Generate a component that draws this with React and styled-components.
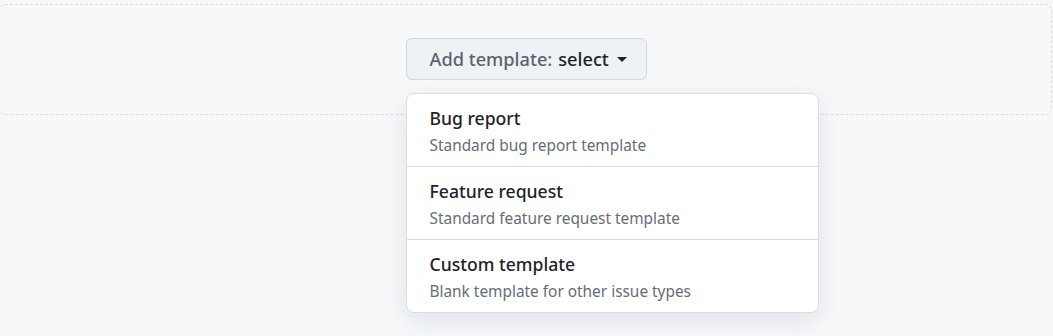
import styled, { createGlobalStyle } from "styled-components";

const GlobalStyle = createGlobalStyle`
    body {
        margin: 0;
        background: #f6f8fa;
        font-family: "Noto Sans", "Open Sans", sans-serif;
    }
`;

const templates = [
    { title: "Bug report", description: "Standard bug report template" },
    { title: "Feature request", description: "Standard feature request template" },
    { title: "Custom template", description: "Blank template for other issue types" }
];

const App = () => (
    <>
        <GlobalStyle />
        <Page>
            <DropZone>
                <Picker>
                    <SelectButton type="button">
                        <ButtonLabel>Add template:</ButtonLabel>
                        <ButtonValue>select</ButtonValue>
                        <Caret />
                    </SelectButton>
                    <Menu>
                        {templates.map(item => (
                            <MenuItem key={item.title}>
                                <ItemTitle>{item.title}</ItemTitle>
                                <ItemDescription>{item.description}</ItemDescription>
                            </MenuItem>
                        ))}
                    </Menu>
                </Picker>
            </DropZone>
        </Page>
    </>
);

const Page = styled.div`
    height: 336px;
    padding-top: 4px;
    box-sizing: border-box;
`;

const DropZone = styled.div`
    box-sizing: border-box;
    width: 1053px;
    margin-left: -1px;
    height: 111px;
    border: 1px dashed #d8dee4;
    border-radius: 6px;
    display: flex;
    justify-content: center;
    padding-top: 33px;
    padding-left: 1px;
`;

const Picker = styled.div`
    position: relative;
    height: 42px;
`;

const SelectButton = styled.button`
    box-sizing: border-box;
    display: flex;
    align-items: center;
    gap: 6px;
    width: 241px;
    height: 42px;
    padding: 0 10px 0 23px;
    background: #eff2f5;
    border: 1px solid #d0d7de;
    border-radius: 6px;
    font-family: inherit;
    font-size: 18.2px;
    font-weight: 500;
    white-space: nowrap;
    cursor: pointer;
`;

const ButtonLabel = styled.span`
    color: #59636e;
`;

const ButtonValue = styled.span`
    color: #1f2328;
    margin-right: 2px;
`;

const Caret = styled.span`
    flex-shrink: 0;
    width: 0;
    height: 0;
    border-left: 5px solid transparent;
    border-right: 5px solid transparent;
    border-top: 5px solid #1f2328;
`;

const Menu = styled.div`
    position: absolute;
    top: 55px;
    left: 0;
    width: 411px;
    background: #ffffff;
    border: 1px solid #d8dee4;
    border-radius: 8px;
    box-shadow: 0 8px 24px rgba(140, 149, 159, 0.2);
    overflow: hidden;
`;

const MenuItem = styled.div`
    height: 73px;
    box-sizing: border-box;
    padding: 11px 23px 0;
    border-top: 1px solid #d8dee4;

    &:first-child {
        border-top: none;
        height: 72px;
    }
`;

const ItemTitle = styled.div`
    color: #1f2328;
    font-size: 17.6px;
    font-weight: 500;
    line-height: 26px;
`;

const ItemDescription = styled.div`
    margin-top: 2px;
    color: #656d76;
    font-size: 15.4px;
    line-height: 26px;
`;

export default App;
